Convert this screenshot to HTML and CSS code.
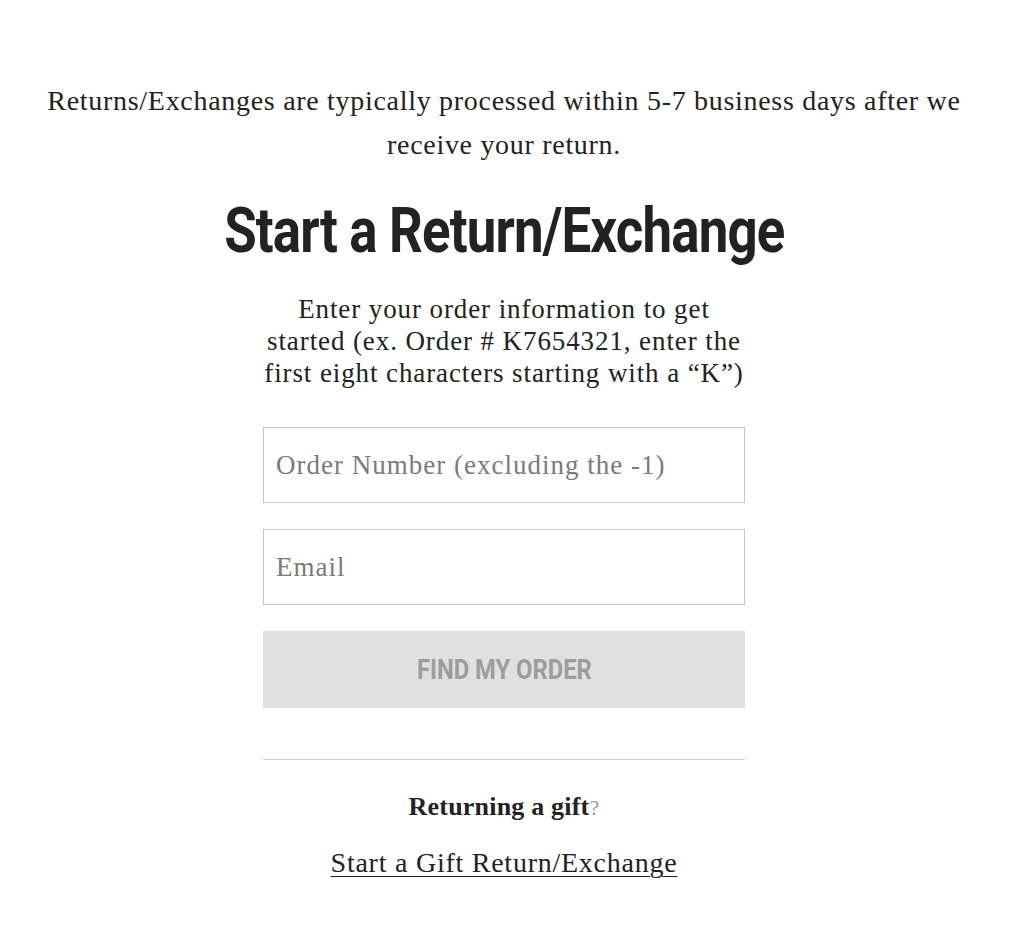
FILE: index.html
```html
<!DOCTYPE html>
<html lang="en">
<head>
<meta charset="utf-8">
<title>Start a Return/Exchange</title>
<link rel="stylesheet" href="styles.css">
</head>
<body>
<main class="page">
  <p class="notice">Returns/Exchanges are typically processed within 5-7 business days after we receive your return.</p>
  <h1 class="title"><span class="title-text">Start a Return/Exchange</span></h1>
  <form class="lookup" onsubmit="return false;">
    <p class="intro">Enter your order information to get started (ex. Order # K7654321, enter the first eight characters starting with a “K”)</p>
    <input class="field field-first" type="text" placeholder="Order Number (excluding the -1)">
    <input class="field" type="email" placeholder="Email">
    <button class="submit" type="submit" disabled><span class="submit-text">FIND MY ORDER</span></button>
    <hr class="divider">
    <p class="gift-q">Returning a gift<span class="gift-mark">?</span></p>
    <a class="gift-link" href="#">Start a Gift Return/Exchange</a>
  </form>
</main>
</body>
</html>
```
FILE: styles.css
```css
html, body {
  margin: 0;
  padding: 0;
  background: #ffffff;
}
body {
  font-family: "Liberation Serif", "Times New Roman", serif;
  color: #222222;
}
.page {
  display: flex;
  flex-direction: column;
  align-items: center;
  padding: 79px 4px 0 0;
}
.notice {
  margin: 0;
  width: 940px;
  text-align: center;
  font-size: 28px;
  letter-spacing: 0.7px;
  line-height: 44px;
}
.title {
  margin: 27px 0 0 0;
  font-family: Roboto, "Liberation Sans", sans-serif;
  font-weight: 700;
  font-size: 63px;
  line-height: 74px;
  color: #222222;
  text-align: center;
  white-space: nowrap;
}
.title-text {
  display: inline-block;
  transform: scaleX(0.838);
  letter-spacing: -1px;
}
.lookup {
  width: 482px;
  display: flex;
  flex-direction: column;
  align-items: stretch;
}
.intro {
  margin: 25px -4px 0 -4px;
  text-align: center;
  font-size: 27px;
  letter-spacing: 0.9px;
  line-height: 32px;
}
.field {
  box-sizing: border-box;
  height: 76px;
  margin-top: 26px;
  padding: 0 12px;
  border: 1px solid #c6c6c6;
  border-radius: 0;
  font-family: "Liberation Serif", "Times New Roman", serif;
  font-size: 27px;
  letter-spacing: 1px;
  color: #222222;
  background: #ffffff;
  outline: none;
}
.field-first {
  margin-top: 38px;
}
.field::placeholder {
  color: #7a7a7a;
}
.submit {
  height: 77px;
  margin-top: 26px;
  border: none;
  background: #e0e0e0;
  color: #9c9c9c;
  font-family: Roboto, "Liberation Sans", sans-serif;
  font-weight: 700;
  font-size: 27px;
  padding: 0;
}
.submit-text {
  display: inline-block;
  transform: scaleX(0.88);
}
.divider {
  margin: 51px 0 0 0;
  border: none;
  border-top: 1px solid #c8c8c8;
  height: 0;
}
.gift-q {
  margin: 30px 0 0 0;
  text-align: center;
  font-weight: 700;
  font-size: 26px;
  letter-spacing: 0.2px;
  line-height: 34px;
}
.gift-mark {
  font-weight: 400;
  font-size: 22px;
  color: #9a9a9a;
}
.gift-link {
  margin-top: 21px;
  align-self: center;
  font-size: 28px;
  letter-spacing: 0.75px;
  line-height: 34px;
  color: #222222;
  text-decoration: underline;
  text-underline-offset: 4px;
  text-decoration-thickness: 1px;
}
```
